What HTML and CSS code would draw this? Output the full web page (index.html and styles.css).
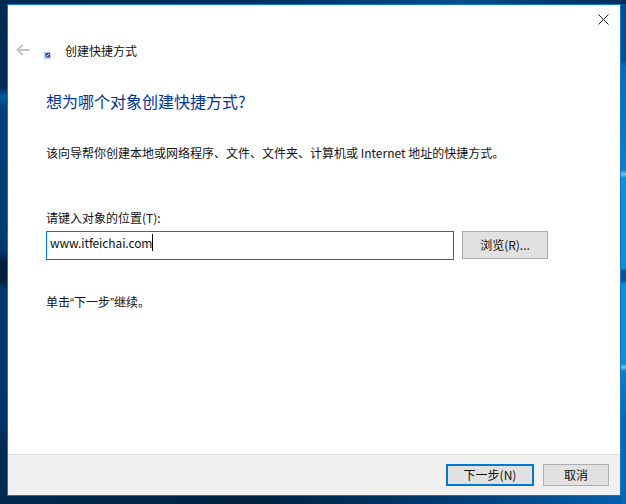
FILE: index.html
```html
<!DOCTYPE html>
<html lang="zh-CN">
<head>
<meta charset="utf-8">
<title>创建快捷方式</title>
<link rel="stylesheet" href="styles.css">
</head>
<body>
<div class="window">
  <div class="titlebar">
    <svg class="close" width="11" height="11" viewBox="0 0 11 11"><path d="M.5.5l10 10M10.500.5l-10 10" stroke="#1a1a1a" stroke-width="1" fill="none"/></svg>
  </div>
  <div class="navbar">
    <svg class="back" width="14" height="12" viewBox="0 0 14 12"><path d="M13.500 6H1.500M6.500 1L1.500 6l5 5" stroke="#c4c4c4" stroke-width="1.800" fill="none"/></svg>
    <svg class="shortcut" width="7" height="7" viewBox="0 0 7 7"><rect width="7" height="7" fill="#c9d0dc"/><rect x="1.500" y="1" width="4.500" height="4.500" fill="#1559b8"/><path d="M2.500 4.500L5 2" stroke="#fff" stroke-width="1"/></svg>
    <span class="wintitle">创建快捷方式</span>
  </div>
  <main class="content">
    <h1 class="heading">想为哪个对象创建快捷方式?</h1>
    <p class="desc">该向导帮你创建本地或网络程序、文件、文件夹、计算机或 Internet 地址的快捷方式。</p>
    <label class="label">请键入对象的位置(T):</label>
    <div class="inputrow">
      <div class="input"><span class="value">www.itfeichai.com</span><i class="caret"></i></div>
      <button class="btn browse">浏览(R)...</button>
    </div>
    <p class="hint">单击<span class="quote">“</span>下一步<span class="quote">”</span>继续。</p>
  </main>
  <footer class="footer">
    <button class="btn next">下一步(N)</button>
    <button class="btn cancel">取消</button>
  </footer>
</div>
</body>
</html>
```
FILE: styles.css
```css
html, body { margin: 0; height: 100%; }
body {
  width: 626px;
  height: 504px;
  overflow: hidden;
  box-sizing: border-box;
  padding: 4px 5px 8px 7px;
  font-family: "Noto Sans CJK SC", "Noto Sans", sans-serif;
  font-size: 12px;
  color: #111;
  background-color: #013a70;
  background-repeat: no-repeat;
  background-size: 626px 4px, 7px 504px, 5px 504px, 626px 8px;
  background-position: 0 0, 0 0, 621px 0, 0 496px;
  background-image:
    linear-gradient(90deg, #012a50 0, #01305c 250px, #0a4d88 460px, #012d55 626px),
    linear-gradient(180deg, #01294f 0, #012c58 88px, #045a9c 96px, #013f7a 110px, #01396e 250px, #011f3d 262px, #011f3d 280px, #01396e 290px, #013566 420px, #012a52 452px, #012a52 504px),
    linear-gradient(180deg, #0b4a85 0, #0b4a85 60px, #0a6ab8 66px, #0a80c8 170px, #7fc4d8 174px, #0a92d8 178px, #0a92d8 268px, #0b4f8c 271px, #0b4f8c 280px, #0a92d8 284px, #0a92d8 364px, #7fc4d8 367px, #0a80c8 371px, #0569b5 420px, #0569b5 504px),
    linear-gradient(90deg, #012a50 0, #012240 250px, #01386c 430px, #0660ad 626px);
}
.window {
  height: 492px;
  box-sizing: border-box;
  border: 1px solid #0a78d2;
  background: #fff;
  display: flex;
  flex-direction: column;
}
.titlebar {
  height: 27px;
  display: flex;
  justify-content: flex-end;
  align-items: flex-start;
  padding: 9px 11px 0 0;
  box-sizing: border-box;
}
.navbar {
  height: 38px;
  display: flex;
  align-items: center;
  padding-left: 8px;
}
.back { margin: -3px 14px 0 0; }
.shortcut { margin: 9px 14px 0 0; }
.wintitle { line-height: 16px; }
.content {
  flex: 1;
  padding: 0 0 0 38px;
}
.heading {
  margin: 20px 0 0;
  font-size: 16px;
  font-weight: 400;
  line-height: 22px;
  color: #003399;
}
.desc {
  margin: 33px 0 0;
  line-height: 16px;
}
.label {
  display: block;
  margin-top: 49px;
  line-height: 16px;
}
.inputrow {
  display: flex;
  gap: 8px;
  margin-top: 5px;
}
.input {
  width: 408px;
  height: 29px;
  box-sizing: border-box;
  border: 1px solid #0078d7;
  padding: 2px 0 0 3px;
  display: flex;
  align-items: flex-start;
}
.value {
  line-height: 17px;
  letter-spacing: -0.1px;
}
.caret {
  width: 1px;
  height: 17px;
  background: #000;
}
.btn {
  font: inherit;
  color: #111;
  background: #e1e1e1;
  border: 1px solid #adadad;
  padding: 0 0 2px;
  box-sizing: border-box;
}
.browse { width: 86px; height: 28px; }
.hint {
  margin: 34px 0 0;
  line-height: 16px;
}
.quote { font-family: "Liberation Sans", sans-serif; }
.footer {
  height: 41px;
  box-sizing: border-box;
  background: #f0f0f0;
  border-top: 1px solid #dfdfdf;
  display: flex;
  justify-content: flex-end;
  align-items: flex-start;
  gap: 9px;
  padding: 9px 11px 0 0;
}
.next { width: 88px; height: 22px; border: 2px solid #0078d7; }
.cancel { width: 66px; height: 22px; }
```
